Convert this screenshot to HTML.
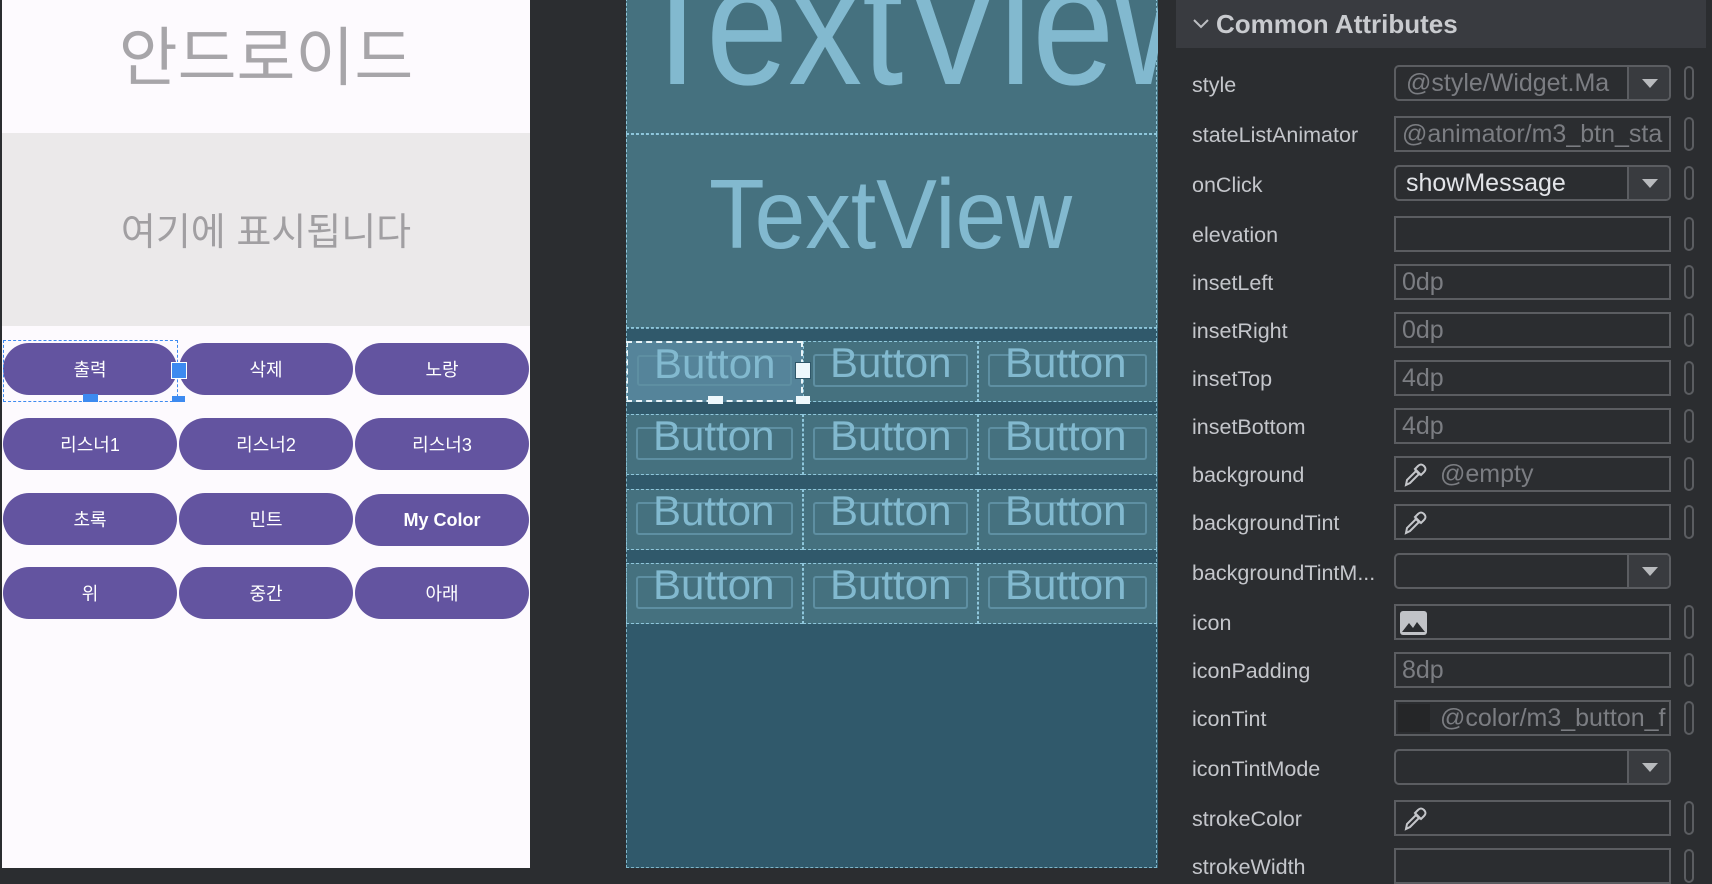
<!DOCTYPE html>
<html><head><meta charset="utf-8"><style>
*{margin:0;padding:0;box-sizing:border-box}
body{width:1712px;height:868px;overflow:hidden;background:#2b2d30;position:relative;font-family:"Liberation Sans","Noto Sans CJK KR",sans-serif}
.a{position:absolute}
#left{left:2px;top:0;width:528px;height:868px;background:#fdfafe}
.kb{position:absolute;height:52px;border-radius:26px;background:#6354a0;color:#fff;font-size:18px;display:flex;align-items:center;justify-content:center}
#bp{left:626px;top:0;width:532px;height:868px;background:#30596b;overflow:hidden}
.dash{border:1px dashed #8fc7dc}
.row{position:absolute;left:0;width:531px;height:61px;background:#45717f}
.cell{position:absolute;top:0;height:61px;border:1px dashed #8fc7dc}
.cell .in{position:absolute;left:9px;right:9px;top:12px;bottom:14px;border:2px solid #5e8fa2;border-radius:3px}
.cell span{position:absolute;left:26px;top:-9px;font-size:42px;color:#82b9cf;line-height:60px}
#props{left:1176px;top:0;width:536px;height:868px;background:#2b2d30}
.lbl{position:absolute;left:16px;font-size:21.5px;color:#c4c6cb;margin-top:1px}
.box{position:absolute;left:218px;width:277px;height:36px;border:2px solid #5b5d61;font-size:25px;color:#7b7d82;padding-left:10px;line-height:33px;overflow:hidden;white-space:nowrap}
.dd{border-radius:5px}
.dd .arr{position:absolute;right:0;top:0;width:42px;height:32px;border-left:2px solid #5b5d61;background:#393b3f}
.dd .arr:after{content:"";position:absolute;left:13px;top:12px;border-left:8px solid transparent;border-right:8px solid transparent;border-top:9px solid #b8babd}
.pill{position:absolute;left:508px;width:10px;height:34px;border:2px solid #5b5d61;border-radius:5px}
</style></head><body>
<div class="a" id="left">
 <div class="a" style="left:0;top:18px;width:528px;text-align:center;font-size:64px;color:#a7a5a9;line-height:80px">안드로이드</div>
 <div class="a" style="left:0;top:133px;width:528px;height:193px;background:#ebe9ea"></div>
 <div class="a" style="left:0;top:205px;width:528px;text-align:center;font-size:38px;color:#a19fa2;line-height:56px">여기에 표시됩니다</div>
</div>
<div class="kb" style="left:3px;top:343px;width:174px">출력</div>
<div class="kb" style="left:179px;top:343px;width:174px">삭제</div>
<div class="kb" style="left:355px;top:343px;width:174px">노랑</div>
<div class="kb" style="left:3px;top:418px;width:174px">리스너1</div>
<div class="kb" style="left:179px;top:418px;width:174px">리스너2</div>
<div class="kb" style="left:355px;top:418px;width:174px">리스너3</div>
<div class="kb" style="left:3px;top:493px;width:174px">초록</div>
<div class="kb" style="left:179px;top:493px;width:174px">민트</div>
<div class="kb" style="left:355px;top:494px;width:174px;font-weight:bold">My Color</div>
<div class="kb" style="left:3px;top:567px;width:174px">위</div>
<div class="kb" style="left:179px;top:567px;width:174px">중간</div>
<div class="kb" style="left:355px;top:567px;width:174px">아래</div>
<div class="a" style="left:3px;top:340px;width:175px;height:62px;border:1.5px dashed #3d8af0"></div>
<div class="a" style="left:171px;top:362px;width:16px;height:17px;background:#3d8af0;border:1.5px solid #fff"></div>
<div class="a" style="left:83px;top:394px;width:15px;height:8px;background:#3d8af0"></div>
<div class="a" style="left:172px;top:396px;width:13px;height:6px;background:#3d8af0"></div>

<div class="a" id="bp">
 <div class="a" style="left:0;top:0;width:532px;height:328px;background:#45717f"></div>
 <div class="a dash" style="left:0;top:-2px;width:531px;height:136px"></div>
 <div class="a dash" style="left:0;top:134px;width:531px;height:194px"></div>
 <div class="a" style="left:6px;top:-61px;font-size:172px;color:#82b9cf;transform:scaleX(.86);transform-origin:left;white-space:nowrap;line-height:172px">TextView</div>
 <div class="a" style="left:83px;top:164px;font-size:98px;color:#82b9cf;transform:scaleX(.93);transform-origin:left;white-space:nowrap;line-height:100px">TextView</div>
 <div class="row" style="top:341px"><div class="cell" style="left:0;width:177px;background:#55849a;border:2px dashed #e8f4f8"><div class="in"></div><span>Button</span></div><div class="cell" style="left:177px;width:175px"><div class="in"></div><span>Button</span></div><div class="cell" style="left:352px;width:179px"><div class="in"></div><span>Button</span></div></div>
 <div class="row" style="top:414px"><div class="cell" style="left:0;width:177px"><div class="in"></div><span>Button</span></div><div class="cell" style="left:177px;width:175px"><div class="in"></div><span>Button</span></div><div class="cell" style="left:352px;width:179px"><div class="in"></div><span>Button</span></div></div>
 <div class="row" style="top:489px"><div class="cell" style="left:0;width:177px"><div class="in"></div><span>Button</span></div><div class="cell" style="left:177px;width:175px"><div class="in"></div><span>Button</span></div><div class="cell" style="left:352px;width:179px"><div class="in"></div><span>Button</span></div></div>
 <div class="row" style="top:563px"><div class="cell" style="left:0;width:177px"><div class="in"></div><span>Button</span></div><div class="cell" style="left:177px;width:175px"><div class="in"></div><span>Button</span></div><div class="cell" style="left:352px;width:179px"><div class="in"></div><span>Button</span></div></div>
 <div class="a dash" style="left:0;top:328px;width:531px;height:540px;border-color:#7fb6ca"></div>
 <div class="a" style="left:169px;top:362px;width:16px;height:17px;background:#eef8fc;border:1.5px solid #2f5769"></div>
 <div class="a" style="left:82px;top:396px;width:15px;height:8px;background:#eef8fc"></div>
 <div class="a" style="left:170px;top:396px;width:14px;height:8px;background:#eef8fc"></div>
</div>

<div class="a" id="props">
 <div class="a" style="left:0;top:0;width:530px;height:48px;background:#393b40"></div>
 <svg class="a" style="left:16px;top:18px" width="18" height="12"><path d="M2 2 L9 9 L16 2" stroke="#bcbec2" stroke-width="2" fill="none"/></svg>
 <div class="a" style="left:40px;top:9px;font-size:26px;font-weight:bold;color:#c9cbcf">Common Attributes</div>

 <div class="lbl" style="top:72px">style</div>
 <div class="box dd" style="top:65px">@style/Widget.Ma<div class="arr"></div></div><div class="pill" style="top:66px"></div>
 <div class="lbl" style="top:122px">stateListAnimator</div>
 <div class="box" style="top:116px;padding-left:6px">@animator/m3_btn_sta</div><div class="pill" style="top:117px"></div>
 <div class="lbl" style="top:172px">onClick</div>
 <div class="box dd" style="top:165px;color:#e2e4e8">showMessage<div class="arr"></div><div class="a" style="left:12px;top:34px;width:160px;height:4px;background:#f0952f"></div></div><div class="pill" style="top:166px"></div>
 <div class="lbl" style="top:222px">elevation</div>
 <div class="box" style="top:216px"></div><div class="pill" style="top:217px"></div>
 <div class="lbl" style="top:270px">insetLeft</div>
 <div class="box" style="top:264px;padding-left:6px">0dp</div><div class="pill" style="top:265px"></div>
 <div class="lbl" style="top:318px">insetRight</div>
 <div class="box" style="top:312px;padding-left:6px">0dp</div><div class="pill" style="top:313px"></div>
 <div class="lbl" style="top:366px">insetTop</div>
 <div class="box" style="top:360px;padding-left:6px">4dp</div><div class="pill" style="top:361px"></div>
 <div class="lbl" style="top:414px">insetBottom</div>
 <div class="box" style="top:408px;padding-left:6px">4dp</div><div class="pill" style="top:409px"></div>
 <div class="lbl" style="top:462px">background</div>
 <div class="box" style="top:456px;padding-left:44px">@empty<svg class="a" style="left:6px;top:4px" width="26" height="26"><path d="M4 23 L5 18 L14 9 L17 12 L8 21 Z M13 8 L18 13 M16 4 Q19 1 22 4 Q25 7 22 10 L19 13 L13 7 Z" stroke="#c4c6ca" stroke-width="2" fill="none"/></svg></div><div class="pill" style="top:457px"></div>
 <div class="lbl" style="top:510px">backgroundTint</div>
 <div class="box" style="top:504px"><svg class="a" style="left:6px;top:4px" width="26" height="26"><path d="M4 23 L5 18 L14 9 L17 12 L8 21 Z M13 8 L18 13 M16 4 Q19 1 22 4 Q25 7 22 10 L19 13 L13 7 Z" stroke="#c4c6ca" stroke-width="2" fill="none"/></svg></div><div class="pill" style="top:505px"></div>
 <div class="lbl" style="top:560px">backgroundTintM...</div>
 <div class="box dd" style="top:553px"><div class="arr"></div></div>
 <div class="lbl" style="top:610px">icon</div>
 <div class="box" style="top:604px"><svg class="a" style="left:3px;top:4px" width="29" height="26"><rect x="1" y="1" width="27" height="24" rx="3" fill="#c1c3c7"/><path d="M3 22 L10 13 L14 18 L18 12 L26 22 Z" fill="#2b2d30"/></svg></div><div class="pill" style="top:605px"></div>
 <div class="lbl" style="top:658px">iconPadding</div>
 <div class="box" style="top:652px;padding-left:6px">8dp</div><div class="pill" style="top:653px"></div>
 <div class="lbl" style="top:706px">iconTint</div>
 <div class="box" style="top:700px;padding-left:44px">@color/m3_button_f<div class="a" style="left:2px;top:2px;width:32px;height:28px;background:#252628"></div></div><div class="pill" style="top:701px"></div>
 <div class="lbl" style="top:756px">iconTintMode</div>
 <div class="box dd" style="top:749px"><div class="arr"></div></div>
 <div class="lbl" style="top:806px">strokeColor</div>
 <div class="box" style="top:800px"><svg class="a" style="left:6px;top:4px" width="26" height="26"><path d="M4 23 L5 18 L14 9 L17 12 L8 21 Z M13 8 L18 13 M16 4 Q19 1 22 4 Q25 7 22 10 L19 13 L13 7 Z" stroke="#c4c6ca" stroke-width="2" fill="none"/></svg></div><div class="pill" style="top:801px"></div>
 <div class="lbl" style="top:854px">strokeWidth</div>
 <div class="box" style="top:848px"></div><div class="pill" style="top:849px"></div>
</div>
</body></html>
